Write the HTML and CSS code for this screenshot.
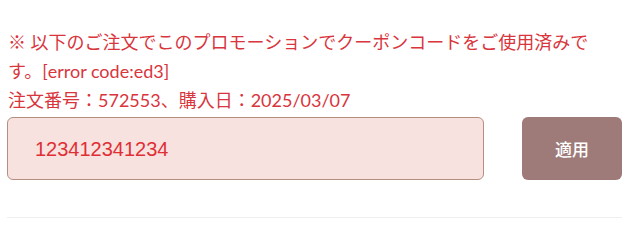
FILE: index.html
```html
<!DOCTYPE html>
<html lang="ja">
<head>
<meta charset="utf-8">
<link rel="stylesheet" href="styles.css">
</head>
<body>
<div class="coupon">
  <div class="message">
    <p class="error">※ 以下のご注文でこのプロモーションでクーポンコードをご使用済みです。[error code:ed3]</p>
    <p class="order">注文番号：572553、購入日：2025/03/07</p>
  </div>
  <div class="form-row">
    <input class="code-input" type="text" value="123412341234">
    <button class="apply-btn" type="button">適用</button>
  </div>
  <div class="divider"></div>
</div>
</body>
</html>
```

FILE: styles.css
```css
html, body {
  margin: 0;
  padding: 0;
  background: #ffffff;
}

.coupon {
  width: 615px;
  margin-left: 7px;
  padding-top: 28px;
}

.message {
  padding-left: 1px;
  padding-right: 26px;
  font-family: "Lato", "Noto Sans CJK JP", sans-serif;
  font-size: 18px;
  line-height: 29px;
  color: #d8353d;
}

.message p {
  margin: 0;
}

.form-row {
  display: flex;
  justify-content: space-between;
  margin-top: 2px;
}

.code-input {
  box-sizing: border-box;
  width: 477px;
  height: 63px;
  margin: 0;
  padding: 1px 0 0 27px;
  border: 1px solid #b48f80;
  border-radius: 6px;
  background: #f8e2e0;
  font-family: "Liberation Sans", Arial, sans-serif;
  font-size: 20px;
  color: #e02e35;
  outline: none;
}

.apply-btn {
  box-sizing: border-box;
  width: 100px;
  height: 63px;
  margin: 0;
  padding: 0;
  border: none;
  border-radius: 6px;
  background: #9e7b79;
  color: #ffffff;
  font-family: "Noto Sans CJK JP", sans-serif;
  font-size: 17px;
  font-weight: 500;
}

.divider {
  margin-top: 37px;
  height: 1px;
  background: #efefef;
}
```
